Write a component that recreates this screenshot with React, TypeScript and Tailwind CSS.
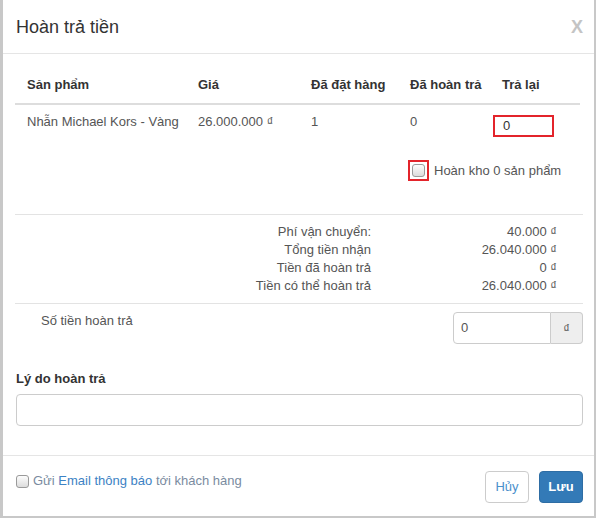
import React from 'react';

const Check: React.FC = () => (
    <span className="block w-[13px] h-[13px] rounded-[3px] border border-[#9a9a9a] bg-gradient-to-b from-[#fdfdfd] to-[#dcdcdc]" />
);

const Dong: React.FC = () => <span className="text-[13px] leading-none">₫</span>;

const SUMMARY = [
    ['Phí vận chuyển:', '40.000'],
    ['Tổng tiền nhận', '26.040.000'],
    ['Tiền đã hoàn trả', '0'],
    ['Tiền có thể hoàn trả', '26.040.000'],
];

export default function App() {
    return (
        <div className="w-[596px] h-[518px] bg-white border-l-[3px] border-r-[2px] border-b-[2px] border-[#c8c8c8] font-['Liberation_Sans',Arial,sans-serif] text-[13px] leading-[18px] text-[#555] flex flex-col">
            {/* header */}
            <div className="h-[54px] shrink-0 border-b border-[#e5e5e5] flex items-center justify-between pl-[13px] pr-[11px]">
                <h4 className="text-[18px] text-[#333]">Hoàn trả tiền</h4>
                <span className="text-[18px] font-bold text-[#c4c4c4]">X</span>
            </div>

            {/* body */}
            <div className="pl-[12px] pr-[11px] flex-1">
                <div className="w-[565px] mt-[13px]">
                    <div className="flex h-[38px] items-center border-b-2 border-[#ddd] font-bold text-[#333]">
                        <div className="w-[171px] pl-[12px]">Sản phẩm</div>
                        <div className="w-[113px] pl-[12px]">Giá</div>
                        <div className="w-[99px] pl-[12px]">Đã đặt hàng</div>
                        <div className="w-[92px] pl-[12px]">Đã hoàn trả</div>
                        <div className="w-[90px] pl-[12px]">Trả lại</div>
                    </div>
                    <div className="flex h-[35px] pt-[8px] items-start">
                        <div className="w-[171px] pl-[12px]">Nhẫn Michael Kors - Vàng</div>
                        <div className="w-[113px] pl-[12px]">26.000.000 <Dong /></div>
                        <div className="w-[99px] pl-[12px]">1</div>
                        <div className="w-[92px] pl-[12px]">0</div>
                        <div className="w-[90px] pl-[3px]">
                            <div className="mt-[2px] w-[61px] h-[22px] border-2 border-[#e3242b] pl-[8px] leading-[18px] text-[#333]">0</div>
                        </div>
                    </div>
                </div>
                <div className="mt-[20px] ml-[393px] flex items-center gap-[5px]">
                    <div className="w-[21px] h-[21px] border-2 border-[#e3242b] flex items-center justify-center">
                        <Check />
                    </div>
                    <span>Hoàn kho 0 sản phẩm</span>
                </div>

                <div className="mt-[33px] border-t border-[#e3e3e3] pt-[8px] pb-[8px]">
                    {SUMMARY.map(([label, value]) => (
                        <div key={label} className="flex h-[18px] leading-[18px]">
                            <div className="w-[356px] text-right">{label}</div>
                            <div className="w-[186px] text-right">{value} <Dong /></div>
                        </div>
                    ))}
                </div>

                <div className="border-t border-[#e3e3e3] pt-[8px] flex items-start justify-between">
                    <span className="pl-[26px]">Số tiền hoàn trả</span>
                    <div className="flex w-[130px] h-[32px]">
                        <div className="flex-1 border border-[#ccc] rounded-l-[4px] pl-[7px] flex items-center text-[#555]">0</div>
                        <div className="w-[32px] border border-l-0 border-[#ccc] rounded-r-[4px] bg-[#eee] flex items-center justify-center"><Dong /></div>
                    </div>
                </div>

                <div className="mt-[26px] pl-[1px]">
                    <div className="font-bold text-[#333]">Lý do hoàn trả</div>
                    <div className="mt-[6px] h-[32px] border border-[#ccc] rounded-[4px]" />
                </div>
            </div>

            {/* footer */}
            <div className="h-[61px] shrink-0 border-t border-[#e5e5e5] pt-[15px] pl-[13px] pr-[11px] flex items-start justify-between">
                <label className="mt-[1px] flex items-center gap-[4px] text-[#7a8ba0]">
                    <Check />
                    <span>Gửi <span className="text-[#3c82c4]">Email thông báo</span> tới khách hàng</span>
                </label>
                <div className="flex gap-[10px]">
                    <button className="w-[44px] h-[32px] rounded-[4px] border border-[#ccc] bg-white text-[#4a90cc]">Hủy</button>
                    <button className="w-[44px] h-[32px] rounded-[4px] border border-[#2e6da4] bg-[#337ab7] text-white font-bold">Lưu</button>
                </div>
            </div>
        </div>
    );
}
